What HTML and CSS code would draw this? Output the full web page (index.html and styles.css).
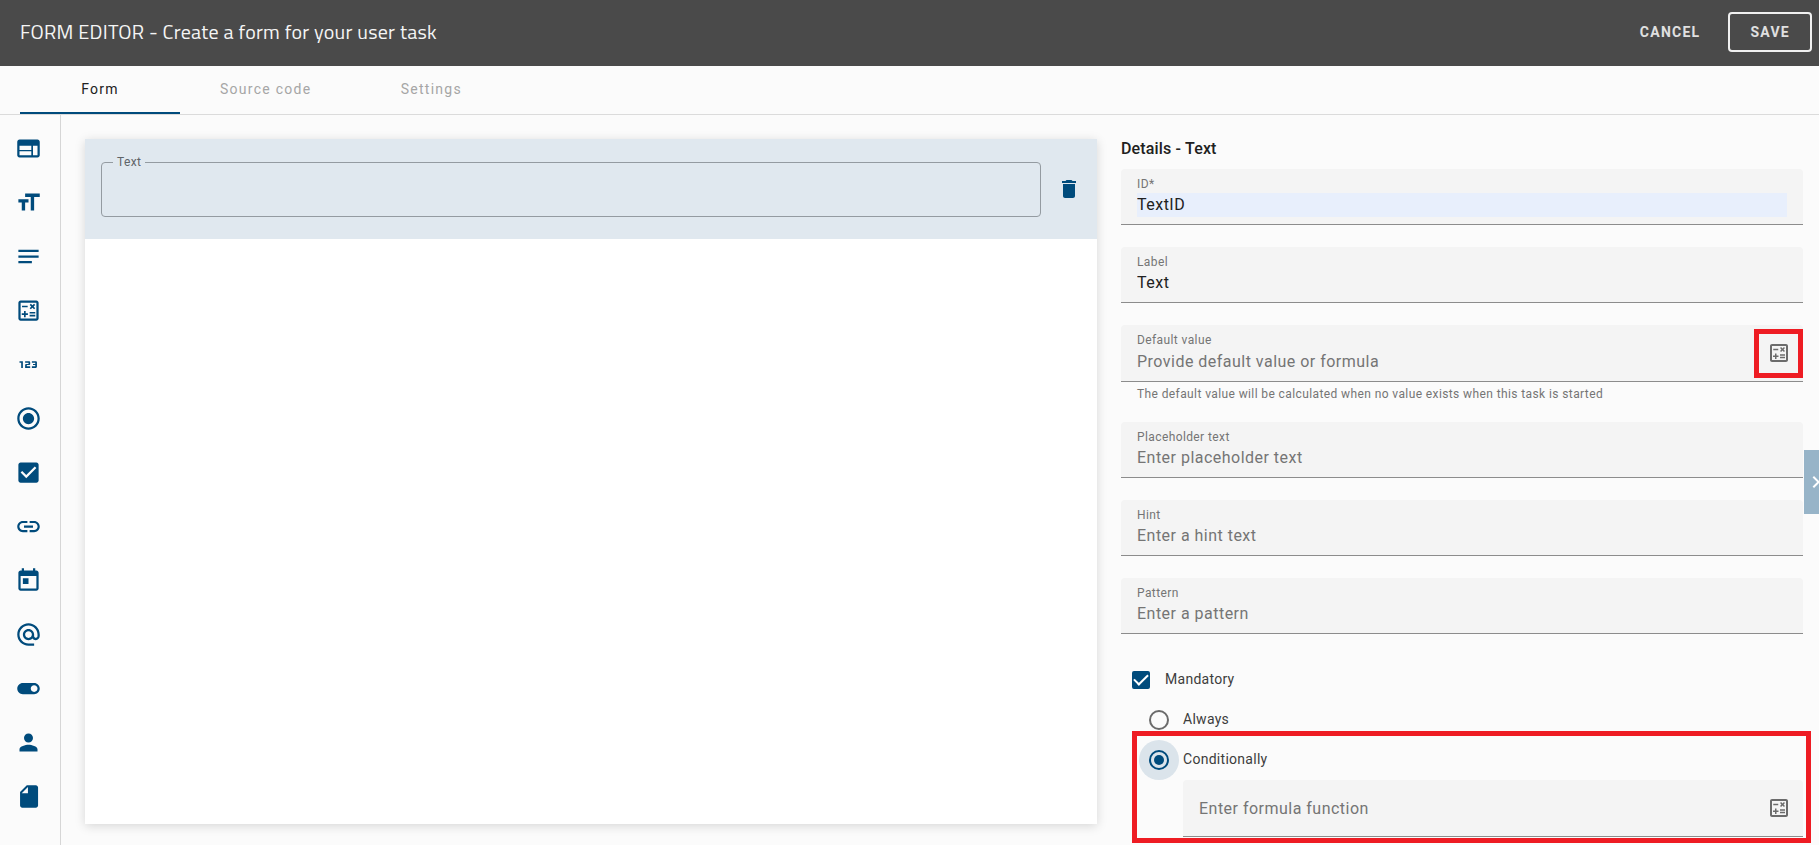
FILE: index.html
```html
<!DOCTYPE html>
<html lang="en">
<head>
<meta charset="utf-8">
<meta name="viewport" content="width=device-width, initial-scale=1.0">
<title>Form editor</title>
<link rel="stylesheet" href="styles.css">
</head>
<body>
<svg class="sprite" aria-hidden="true">
  <symbol id="calc" viewBox="0 0 24 24">
    <path d="M19 3H5c-1.1 0-2 .9-2 2v14c0 1.1.9 2 2 2h14c1.1 0 2-.9 2-2V5c0-1.1-.9-2-2-2zm0 16H5V5h14v14z"/>
    <path d="M6.25 7.72h5v1.5h-5zM13 15.75h5v1.5h-5zM13 13.25h5v1.5h-5zM8 18h1.5v-2h2v-1.5h-2v-2H8v2H6V16h2zM14.09 10.95l1.41-1.41 1.41 1.41 1.06-1.06-1.41-1.42 1.41-1.41L16.91 6 15.5 7.41 14.09 6l-1.06 1.06 1.41 1.41-1.41 1.42z"/>
  </symbol>
</svg>
<header class="topbar">
  <h1>FORM EDITOR - Create a form for your user task</h1>
  <button type="button" class="btn">CANCEL</button>
  <button type="button" class="btn btn-outlined">SAVE</button>
</header>
<nav class="tabs">
  <button type="button" class="tab active">Form</button>
  <button type="button" class="tab">Source code</button>
  <button type="button" class="tab">Settings</button>
</nav>
<main class="editor">
  <aside class="palette">
    <button type="button" aria-label="Section"><svg viewBox="0 0 24 24"><path d="M20 4H4c-1.1 0-2 .9-2 2v12c0 1.1.9 2 2 2h16c1.1 0 2-.9 2-2V6c0-1.1-.9-2-2-2zM4 9.5h10.5v3.8H4zm0 5h10.5V18H4zM20 18h-4V9.5h4z"/></svg></button>
    <button type="button" aria-label="Text"><svg viewBox="0 0 24 24"><path d="M9 4v3h5v12h3V7h5V4H9zm-6 8h3v7h3v-7h3V9H3v3z"/></svg></button>
    <button type="button" aria-label="Text area"><svg viewBox="0 0 24 24"><path d="M3 18h12v-2H3v2zM3 6v2h18V6H3zm0 7h18v-2H3v2z"/></svg></button>
    <button type="button" aria-label="Formula"><svg><use href="#calc"/></svg></button>
    <button type="button" aria-label="Number"><svg viewBox="0 0 24 24"><path d="M7 15H5.5v-4.5H4V9h3v6zm6.5-1.5h-3v-1h2c.55 0 1-.45 1-1V10c0-.55-.45-1-1-1H9v1.5h3v1h-2c-.55 0-1 .45-1 1V15h4.5v-1.5zm6 .5v-4c0-.55-.45-1-1-1H15v1.5h3v1h-2v1h2v1h-3V15h3.5c.55 0 1-.45 1-1z"/></svg></button>
    <button type="button" aria-label="Radio button"><svg viewBox="0 0 24 24"><path d="M12 7c-2.76 0-5 2.24-5 5s2.24 5 5 5 5-2.24 5-5-2.24-5-5-5zm0-5C6.48 2 2 6.48 2 12s4.48 10 10 10 10-4.48 10-10S17.52 2 12 2zm0 18c-4.42 0-8-3.58-8-8s3.58-8 8-8 8 3.58 8 8-3.58 8-8 8z"/></svg></button>
    <button type="button" aria-label="Checkbox"><svg viewBox="0 0 24 24"><path d="M19 3H5c-1.11 0-2 .9-2 2v14c0 1.1.89 2 2 2h14c1.11 0 2-.9 2-2V5c0-1.1-.89-2-2-2zm-9 14l-5-5 1.41-1.41L10 14.17l7.59-7.59L19 8l-9 9z"/></svg></button>
    <button type="button" aria-label="Link"><svg viewBox="0 0 24 24"><path d="M3.9 12c0-1.71 1.39-3.1 3.1-3.1h4V7H7c-2.76 0-5 2.24-5 5s2.24 5 5 5h4v-1.9H7c-1.71 0-3.1-1.39-3.1-3.1zM8 13h8v-2H8v2zm9-6h-4v1.9h4c1.71 0 3.1 1.39 3.1 3.1s-1.39 3.1-3.1 3.1h-4V17h4c2.76 0 5-2.24 5-5s-2.24-5-5-5z"/></svg></button>
    <button type="button" aria-label="Date"><svg viewBox="0 0 24 24"><path d="M19 3h-1V1h-2v2H8V1H6v2H5c-1.11 0-1.99.9-1.99 2L3 19c0 1.1.89 2 2 2h14c1.1 0 2-.9 2-2V5c0-1.1-.9-2-2-2zm0 16H5V8h14v11zM7 10h5v5H7z"/></svg></button>
    <button type="button" aria-label="E-mail"><svg viewBox="0 0 24 24"><path d="M12 2C6.48 2 2 6.48 2 12s4.48 10 10 10h5v-2h-5c-4.34 0-8-3.66-8-8s3.66-8 8-8 8 3.66 8 8v1.43c0 .79-.71 1.57-1.5 1.57s-1.5-.78-1.5-1.57V12c0-2.76-2.24-5-5-5s-5 2.24-5 5 2.24 5 5 5c1.38 0 2.64-.56 3.54-1.47.65.89 1.77 1.47 2.96 1.47 1.97 0 3.5-1.6 3.5-3.57V12c0-5.52-4.48-10-10-10zm0 13c-1.66 0-3-1.34-3-3s1.34-3 3-3 3 1.34 3 3-1.34 3-3 3z"/></svg></button>
    <button type="button" aria-label="Toggle"><svg viewBox="0 0 24 24"><path d="M17 7H7c-2.76 0-5 2.24-5 5s2.24 5 5 5h10c2.76 0 5-2.24 5-5s-2.24-5-5-5zm0 8c-1.66 0-3-1.34-3-3s1.34-3 3-3 3 1.34 3 3-1.34 3-3 3z"/></svg></button>
    <button type="button" aria-label="User"><svg viewBox="0 0 24 24"><path d="M12 12c2.21 0 4-1.79 4-4s-1.79-4-4-4-4 1.79-4 4 1.79 4 4 4zm0 2c-2.67 0-8 1.34-8 4v2h16v-2c0-2.66-5.33-4-8-4z"/></svg></button>
    <button type="button" aria-label="File"><svg viewBox="0 0 24 24"><path d="M10.5 2L4.5 8v12c0 1.1.9 2 2 2h12c1.1 0 2-.9 2-2V4c0-1.1-.9-2-2-2zM6 9l5.5-5.5V9z" fill-rule="evenodd"/></svg></button>
  </aside>
  <div class="workspace">
    <section class="canvas">
      <div class="canvas-row">
        <fieldset class="outlined">
          <legend><label for="preview">Text</label></legend>
          <input type="text" id="preview">
        </fieldset>
        <button type="button" class="delete" aria-label="Delete"><svg viewBox="0 0 24 24"><path d="M6 19c0 1.1.9 2 2 2h8c1.1 0 2-.9 2-2V7H6v12zM19 4h-3.5l-1-1h-5l-1 1H5v2h14V4z"/></svg></button>
      </div>
    </section>
    <section class="details">
      <h2>Details - Text</h2>
      <div class="field">
        <label for="id">ID*</label>
        <input type="text" id="id" class="autofilled" value="TextID">
      </div>
      <div class="field">
        <label for="label">Label</label>
        <input type="text" id="label" value="Text">
      </div>
      <div class="field with-hint">
        <label for="default">Default value</label>
        <input type="text" id="default" placeholder="Provide default value or formula">
        <button type="button" class="formula" aria-label="Edit formula"><svg><use href="#calc"/></svg></button>
        <span class="marker marker-icon"></span>
      </div>
      <p class="hint">The default value will be calculated when no value exists when this task is started</p>
      <div class="field">
        <label for="placeholder">Placeholder text</label>
        <input type="text" id="placeholder" placeholder="Enter placeholder text">
      </div>
      <div class="field">
        <label for="hint">Hint</label>
        <input type="text" id="hint" placeholder="Enter a hint text">
      </div>
      <div class="field">
        <label for="pattern">Pattern</label>
        <input type="text" id="pattern" placeholder="Enter a pattern">
      </div>
      <div class="option mandatory">
        <input type="checkbox" id="mandatory" checked>
        <label for="mandatory">Mandatory</label>
      </div>
      <div class="option">
        <input type="radio" name="when" id="always">
        <label for="always">Always</label>
      </div>
      <div class="conditional">
        <div class="option">
          <input type="radio" name="when" id="conditionally" checked>
          <label for="conditionally">Conditionally</label>
        </div>
        <div class="field unlabeled">
          <input type="text" aria-label="Formula function" placeholder="Enter formula function">
          <button type="button" class="formula" aria-label="Edit formula"><svg><use href="#calc"/></svg></button>
        </div>
        <span class="marker marker-group"></span>
      </div>
    </section>
  </div>
  <button type="button" class="drawer" aria-label="Collapse panel"><svg viewBox="0 0 24 24"><path d="M10 6L8.59 7.41 13.17 12l-4.58 4.59L10 18l6-6z"/></svg></button>
</main>
</body>
</html>
```
FILE: styles.css
```css
* {
  box-sizing: border-box;
}
html {
  background: #fff;
}
body {
  margin: 0;
  padding-bottom: 5px;
  min-height: 100vh;
  display: flex;
  flex-direction: column;
  font-family: Roboto, "Liberation Sans", sans-serif;
  font-size: 14px;
  color: #212121;
  overflow-x: hidden;
}
h1, h2, p { margin: 0; }
button, input { font: inherit; }
button {
  border: 0;
  padding: 0;
  background: none;
  color: inherit;
  cursor: pointer;
}
svg {
  display: block;
  fill: currentColor;
}
.sprite {
  position: absolute;
  width: 0;
  height: 0;
}

/* header */
.topbar {
  display: flex;
  align-items: center;
  height: 66px;
  padding: 0 7px 2px 20px;
  background: #4a4a4a;
  color: #f5f5f5;
}
.topbar h1 {
  flex: 1;
  padding-bottom: 2px;
  font-family: "Titillium Web", Roboto, sans-serif;
  font-size: 20px;
  font-weight: 500;
  letter-spacing: 0.0125em;
}
.btn {
  height: 40px;
  padding: 0 20px;
  font-weight: 700;
  letter-spacing: 0.09em;
  color: #e0e0e0;
}
.btn-outlined {
  margin-left: 8px;
  border: 2px solid #f0f0f0;
  border-radius: 4px;
}

/* tabs */
.tabs {
  display: flex;
  height: 49px;
  padding-left: 20px;
  background: #fbfbfb;
  border-bottom: 1px solid #dbdbdb;
}
.tab {
  min-width: 160px;
  padding: 0 40px;
  border-bottom: 2px solid transparent;
  letter-spacing: 0.09em;
  color: #a6a6a6;
}
.tab.active {
  border-color: #004b7c;
  color: #212121;
}

.editor {
  position: relative;
  flex: 1;
  display: flex;
  background: #fbfbfb;
}

/* component palette */
.palette {
  display: flex;
  flex-direction: column;
  align-items: flex-start;
  gap: 27px;
  width: 61px;
  padding: 20px 15px;
  border-right: 1px solid #d6d6d6;
  color: #004b7c;
}
.palette svg {
  width: 27px;
  height: 27px;
}

.workspace {
  flex: 1;
  display: grid;
  grid-template-columns: 1012fr 682fr;
  column-gap: 24px;
  padding: 24px 16px 0 24px;
}

/* canvas */
.canvas {
  margin-bottom: 21px;
  background: #fff;
  box-shadow: 0 2px 10px rgba(0, 0, 0, 0.15);
}
.canvas-row {
  display: flex;
  align-items: center;
  gap: 16px;
  height: 100px;
  padding: 0 16px 6px;
  background: #e0e8ef;
}
.outlined {
  flex: 1;
  height: 62px;
  margin: 0;
  padding: 0 11px;
  border: 1px solid #949ba1;
  border-radius: 4px;
}
.outlined legend {
  padding: 0 4px;
  font-size: 12px;
  line-height: 14px;
  letter-spacing: 0.03em;
  color: #5f6468;
}
.outlined input {
  width: 100%;
  border: 0;
  outline: 0;
  background: none;
}
.delete {
  padding-top: 6px;
  color: #004b7c;
}
.delete svg {
  width: 24px;
  height: 24px;
}

/* details */
.details h2 {
  margin-bottom: 11px;
  font-size: 16px;
  font-weight: 500;
  line-height: 19px;
  letter-spacing: 0.01em;
}
.field {
  position: relative;
  height: 56px;
  margin-bottom: 22px;
  padding: 7px 16px;
  background: #f4f4f4;
  border-bottom: 1px solid #8c8c8c;
  border-radius: 4px 4px 0 0;
}
.field label {
  display: block;
  margin-bottom: 1px;
  font-size: 12px;
  line-height: 16px;
  letter-spacing: 0.033em;
  color: #757575;
}
.field input {
  display: block;
  width: 100%;
  height: 24px;
  padding: 0 0 2px;
  border: 0;
  outline: 0;
  background: none;
  font-size: 16px;
  letter-spacing: 0.03em;
  color: #212121;
}
.field input::placeholder {
  color: #757575;
  opacity: 1;
}
.field .autofilled {
  background: #e8effc;
}
.with-hint {
  height: 57px;
  margin-bottom: 4px;
}
.with-hint input,
.unlabeled input {
  padding: 0;
}
.hint {
  margin-bottom: 20px;
  padding-left: 16px;
  font-size: 12px;
  line-height: 16px;
  letter-spacing: 0.033em;
  color: #757575;
}
.formula {
  position: absolute;
  right: 12px;
  top: 16px;
  color: #6b6b6b;
}
.formula svg {
  width: 24px;
  height: 24px;
}
.unlabeled {
  margin: 0 0 0 62px;
  height: 57px;
  padding: 16px;
}

/* options */
.option {
  display: flex;
  align-items: center;
  gap: 14px;
  height: 40px;
  padding-left: 28px;
  letter-spacing: 0.02em;
  color: #3d3d3d;
}
.option label {
  padding-bottom: 2px;
}
.option input {
  appearance: none;
  display: grid;
  place-items: center;
  flex: none;
  width: 20px;
  height: 20px;
  margin: 0;
  border: 2px solid #6b6b6b;
  border-radius: 50%;
}
.option input:checked {
  border-color: #004b7c;
}
.option input[type="radio"]:checked {
  box-shadow: 0 0 0 10px #dbe4eb;
  background: #dbe4eb;
}
.option input[type="radio"]:checked::before {
  content: "";
  width: 10px;
  height: 10px;
  border-radius: 50%;
  background: #004b7c;
}
.mandatory {
  gap: 15px;
  margin-top: 26px;
  padding-left: 11px;
}
.option input[type="checkbox"] {
  width: 18px;
  height: 18px;
  border-radius: 2px;
}
.option input[type="checkbox"]:checked {
  background: #004b7c;
}
.option input[type="checkbox"]:checked::before {
  content: "";
  width: 12px;
  height: 6px;
  margin-bottom: 4px;
  border: solid #fff;
  border-width: 0 0 2px 2px;
  transform: rotate(-45deg);
}
.conditional {
  position: relative;
  padding-bottom: 8px;
}

/* red markers */
.marker {
  position: absolute;
  border: 5px solid #ee1c23;
  pointer-events: none;
}
.marker-icon {
  right: 0;
  top: 4px;
  width: 49px;
  height: 49px;
}
.marker-group {
  inset: -9px -8px 2px 11px;
}

.drawer {
  position: absolute;
  right: 0;
  top: 335px;
  width: 15px;
  height: 64px;
  overflow: hidden;
  background: #97b4c8;
  color: #fff;
}
.drawer svg {
  width: 24px;
  height: 24px;
}
```
